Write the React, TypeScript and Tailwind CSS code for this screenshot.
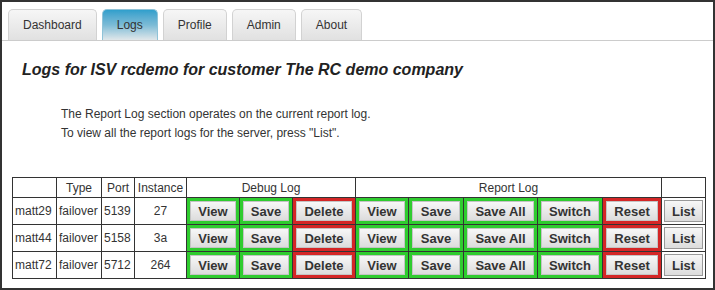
import React from "react";

const tabs = ["Dashboard", "Logs", "Profile", "Admin", "About"];

const rows = [
  { host: "matt29", type: "failover", port: "5139", instance: "27" },
  { host: "matt44", type: "failover", port: "5158", instance: "3a" },
  { host: "matt72", type: "failover", port: "5712", instance: "264" },
];

const debugButtons = [
  { label: "View", danger: false },
  { label: "Save", danger: false },
  { label: "Delete", danger: true },
];

const reportButtons = [
  { label: "View", danger: false },
  { label: "Save", danger: false },
  { label: "Save All", danger: false },
  { label: "Switch", danger: false },
  { label: "Reset", danger: true },
];

const colWidths = [44, 45, 33, 52, 53, 53, 63, 53, 55, 74, 65, 59, 44];

function Tab({ label, active }: { label: string; active: boolean }) {
  return (
    <div
      className={`h-[31px] px-[14px] flex items-center border border-b-0 rounded-t-[5px] text-[12px] text-[#333] ${
        active
          ? "border-[#8fc3d8] bg-linear-to-b from-[#2f9fcc] via-[#7bbbd6] to-[#e0e7ea]"
          : "border-[#d2d2d2] bg-linear-to-b from-[#f6f6f6] to-[#e1e1e1]"
      }`}
    >
      {label}
    </div>
  );
}

function ActionCell({ label, danger }: { label: string; danger: boolean }) {
  return (
    <td
      className={`border border-[#333] p-[3px] ${
        danger ? "bg-[#d42626]" : "bg-[#2fcc2f]"
      }`}
    >
      <button className="w-full h-[20px] border border-[#c4c4c4] bg-linear-to-b from-[#f7f7f7] to-[#dcdcdc] text-[13px] font-bold text-[#333] leading-none">
        {label}
      </button>
    </td>
  );
}

export default function App() {
  return (
    <div className="w-[715px] h-[290px] bg-white border-2 border-[#333] font-['Liberation_Sans',Arial,sans-serif] text-[#333] overflow-hidden">
      <div className="flex gap-[5px] pl-[6px] pt-[7px] border-b border-[#cccccc]">
        {tabs.map((t) => (
          <Tab key={t} label={t} active={t === "Logs"} />
        ))}
      </div>

      <h1 className="mt-[20px] pl-[20px] text-[16px] leading-[18px] font-bold italic text-[#222]">
        Logs for ISV rcdemo for customer The RC demo company
      </h1>

      <div className="mt-[26px] ml-[59px] text-[12px] leading-[19px]">
        <p>The Report Log section operates on the current report log.</p>
        <p>To view all the report logs for the server, press "List".</p>
      </div>

      <table className="mt-[34px] ml-[10px] table-fixed border-collapse w-[694px] text-[12px]">
        <colgroup>
          {colWidths.map((w, i) => (
            <col key={i} style={{ width: w }} />
          ))}
        </colgroup>
        <thead>
          <tr className="h-[20px]">
            <th className="border border-[#333] font-normal"></th>
            <th className="border border-[#333] font-normal">Type</th>
            <th className="border border-[#333] font-normal">Port</th>
            <th className="border border-[#333] font-normal">Instance</th>
            <th colSpan={3} className="border border-[#333] font-normal">
              Debug Log
            </th>
            <th colSpan={5} className="border border-[#333] font-normal">
              Report Log
            </th>
            <th className="border border-[#333] font-normal"></th>
          </tr>
        </thead>
        <tbody>
          {rows.map((r) => (
            <tr key={r.host} className="h-[27px]">
              <td className="border border-[#333] px-[2px] whitespace-nowrap">{r.host}</td>
              <td className="border border-[#333] px-[2px] whitespace-nowrap">{r.type}</td>
              <td className="border border-[#333] px-[2px]">{r.port}</td>
              <td className="border border-[#333] px-[2px] text-center">{r.instance}</td>
              {debugButtons.map((b) => (
                <ActionCell key={"d" + b.label} label={b.label} danger={b.danger} />
              ))}
              {reportButtons.map((b) => (
                <ActionCell key={"r" + b.label} label={b.label} danger={b.danger} />
              ))}
              <td className="border border-[#333] p-[2px]">
                <button className="w-full h-[22px] border border-[#999] bg-linear-to-b from-[#f7f7f7] to-[#dcdcdc] text-[13px] font-bold text-[#333] leading-none">
                  List
                </button>
              </td>
            </tr>
          ))}
        </tbody>
      </table>
    </div>
  );
}
